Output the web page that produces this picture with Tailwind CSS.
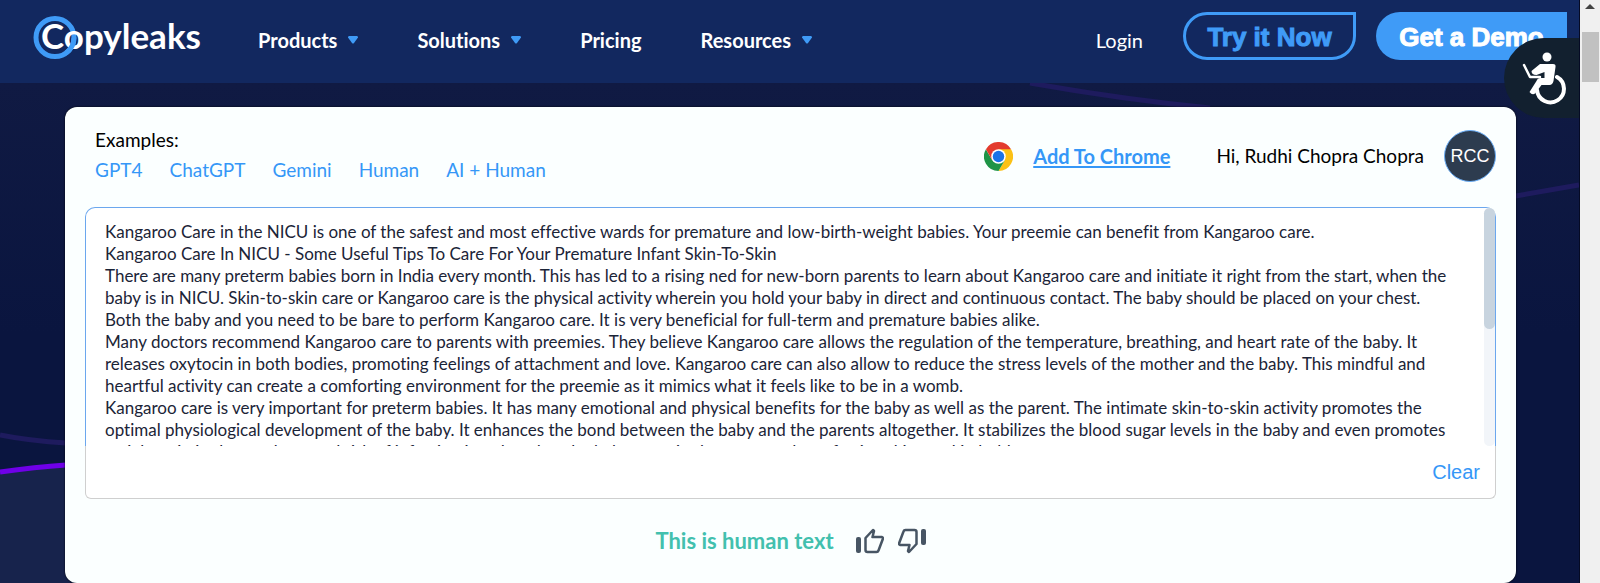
<!DOCTYPE html>
<html lang="en">
<head>
<meta charset="utf-8">
<meta name="viewport" content="width=device-width, initial-scale=1">
<title>Copyleaks AI Content Detector</title>
<script src="https://cdn.jsdelivr.net/npm/@tailwindcss/browser@4"></script>
</head>
<body class="flex h-screen overflow-hidden bg-[#0a153f] font-['Lato',sans-serif] text-black [font-variant-ligatures:none]">
<div class="relative flex min-w-0 flex-1 flex-col border-r border-[#050a24]">
  <header class="flex h-[83px] shrink-0 items-start bg-[#12285f] pl-[33px] pr-3">
    <a href="#" class="mt-4 block" aria-label="Copyleaks">
      <svg class="h-[43px] w-[180px]" viewBox="0 0 180 43">
        <circle cx="22" cy="21.500" r="19" fill="none" stroke="#3f9bf7" stroke-width="5"/>
        <text x="8" y="33" font-size="35" font-weight="700" fill="#fff">Copyleaks</text>
        <path d="M41 21.500a19 19 0 0 1-8 15.500" fill="none" stroke="#3f9bf7" stroke-width="5"/>
      </svg>
    </a>
    <nav class="ml-[45px] mt-7 flex gap-[59px] text-xl/6 font-bold text-white">
      <a href="#" class="flex items-center gap-[11px]">Products<svg width="10" height="8" viewBox="0 0 10 8" fill="#3f9bf7"><path d="M1 0h8q1 .3 1 1.500L6 7q-1 1-2 0L0 1.500Q0 .3 1 0z"/></svg></a>
      <a href="#" class="flex items-center gap-[11px]">Solutions<svg width="10" height="8" viewBox="0 0 10 8" fill="#3f9bf7"><path d="M1 0h8q1 .3 1 1.500L6 7q-1 1-2 0L0 1.500Q0 .3 1 0z"/></svg></a>
      <a href="#">Pricing</a>
      <a href="#" class="flex items-center gap-[11px]">Resources<svg width="10" height="8" viewBox="0 0 10 8" fill="#3f9bf7"><path d="M1 0h8q1 .3 1 1.500L6 7q-1 1-2 0L0 1.500Q0 .3 1 0z"/></svg></a>
    </nav>
    <a href="#" class="ml-auto mr-10 mt-7 text-xl/6 text-white">Login</a>
    <button class="mr-5 mt-3 h-12 w-[173px] rounded-[24px] rounded-tr-none border-3 border-[#3f9bf7] pt-[2px] font-['Liberation_Sans',sans-serif] text-[26px]/6 font-bold text-[#3f9bf7] [-webkit-text-stroke:1px]">Try it Now</button>
    <button class="mt-3 h-12 w-[191px] rounded-l-[24px] bg-[#3f9bf7] pt-[2px] font-['Liberation_Sans',sans-serif] text-[26px]/6 font-bold text-white [-webkit-text-stroke:1px]">Get a Demo</button>
  </header>

  <main class="relative min-h-0 flex-1 pl-[65px] pr-[63px] pt-6">
    <svg class="absolute inset-0 h-full w-full" viewBox="0 0 1579 500" preserveAspectRatio="none" fill="none">
      <defs><linearGradient id="sky" x2="0" y2="1"><stop stop-color="#101a43"/><stop offset=".5" stop-color="#0a153f"/><stop offset="1" stop-color="#0a153f"/></linearGradient></defs>
      <path fill="url(#sky)" d="M0 0h1579v500H0z"/>
      <path fill="#17234c" d="M0 390L70 381V500H0z"/>
      <path stroke="#1e1b5e" stroke-width="5" d="M1030 0Q1120 16 1210 25M0 352Q30 358 66 360M1510 114L1579 102"/>
      <path stroke="#6f00e8" stroke-width="5" d="M0 389Q35 384 66 382"/>
      <path stroke="#7c50d0" stroke-width="3" d="M88 500h24M948 500h22"/>
    </svg>
    <section class="relative rounded-xl bg-[#fbffff] px-5 pb-[26px] pt-[18px] shadow-[0_0_2px_#000]">
      <div class="flex items-start justify-between pl-[10px]">
        <div class="text-[19px]/[30px]">
          <p>Examples:</p>
          <div class="flex gap-[27px] text-[#3597f7]">
            <a href="#">GPT4</a><a href="#">ChatGPT</a><a href="#">Gemini</a><a href="#">Human</a><a href="#">AI + Human</a>
          </div>
        </div>
        <div class="mt-[5px] flex items-center text-[19px]/[30px]">
          <svg class="mr-5" width="29" height="29" viewBox="0 0 48 48">
            <path fill="#e33b2e" d="M24 24L3.200 12A24 24 0 0 1 44.800 12z"/>
            <path fill="#fbc116" d="M24 12h20.800A24 24 0 0 1 24 48L34.400 30z"/>
            <path fill="#1e9446" d="M3.200 12A24 24 0 0 0 24 48L34.400 30 24 34 13.600 30z"/>
            <path fill="#e33b2e" d="M3.200 12L13.600 30 18 16 24 12h20.800z"/>
            <circle cx="24" cy="24" r="12" fill="#fff"/><circle cx="24" cy="24" r="9.500" fill="#1a73e8"/>
          </svg>
          <a href="#" class="mr-[46px] text-xl/[30px] font-bold text-[#3597f7] underline decoration-2 underline-offset-2">Add To Chrome</a>
          <span class="mr-5">Hi, Rudhi Chopra Chopra</span>
          <button class="size-[52px] rounded-full border border-[#69acf5] bg-[#2d3c4f] font-['Liberation_Sans',sans-serif] text-lg text-white">RCC</button>
        </div>
      </div>
      <div class="mt-[22px] rounded-t-[10px] rounded-b-md bg-white">
        <div class="flex h-[239px] rounded-t-[10px] border-x border-t border-[#6ba7ee]">
          <textarea aria-label="Text to check" wrap="off" spellcheck="false" class="h-full min-w-0 flex-1 resize-none overflow-hidden bg-transparent pl-[19px] pt-[13px] text-[17px]/[22px] text-[#1b2437] outline-none">Kangaroo Care in the NICU is one of the safest and most effective wards for premature and low-birth-weight babies. Your preemie can benefit from Kangaroo care.
Kangaroo Care In NICU - Some Useful Tips To Care For Your Premature Infant Skin-To-Skin
There are many preterm babies born in India every month. This has led to a rising ned for new-born parents to learn about Kangaroo care and initiate it right from the start, when the
baby is in NICU. Skin-to-skin care or Kangaroo care is the physical activity wherein you hold your baby in direct and continuous contact. The baby should be placed on your chest.
Both the baby and you need to be bare to perform Kangaroo care. It is very beneficial for full-term and premature babies alike.
Many doctors recommend Kangaroo care to parents with preemies. They believe Kangaroo care allows the regulation of the temperature, breathing, and heart rate of the baby. It
releases oxytocin in both bodies, promoting feelings of attachment and love. Kangaroo care can also allow to reduce the stress levels of the mother and the baby. This mindful and
heartful activity can create a comforting environment for the preemie as it mimics what it feels like to be in a womb.
Kangaroo care is very important for preterm babies. It has many emotional and physical benefits for the baby as well as the parent. The intimate skin-to-skin activity promotes the
optimal physiological development of the baby. It enhances the bond between the baby and the parents altogether. It stabilizes the blood sugar levels in the baby and even promotes
weight gain in the newborn and risk of infection is reduced as the baby stays in the warm and comforting skin-to-skin hold.</textarea>
          <div class="h-full w-[11px] shrink-0 rounded-full bg-[#f2f5f9]"><div class="h-[121px] rounded-full bg-[#c8d4df]"></div></div>
        </div>
        <div class="flex h-[53px] items-center justify-end rounded-b-md border-x border-b border-[#cfcfcf] pr-[15px]">
          <button class="font-['Liberation_Sans',sans-serif] text-xl/6 text-[#3597f7]">Clear</button>
        </div>
      </div>
      <div class="mt-[26px] flex items-center justify-center text-[#475564]">
        <p class="mr-[22px] text-[22px]/8 font-bold text-[#42c0ae]">This is human text</p>
        <button aria-label="Like" class="mr-[14px]"><svg width="28" height="26" viewBox="0 0 28 26"><rect y="9" width="5" height="16" rx="2" fill="currentColor"/><path d="M9.500 10L17 2l1 1-1.500 6H26q1 .5 1 1.500l-4.500 12q-.5 1.500-2 1.500h-9q-2 0-2-2z" fill="none" stroke="currentColor" stroke-width="2.500" stroke-linejoin="round"/></svg></button>
        <button aria-label="Dislike"><svg class="rotate-180" width="28" height="26" viewBox="0 0 28 26"><rect y="9" width="5" height="16" rx="2" fill="currentColor"/><path d="M9.500 10L17 2l1 1-1.500 6H26q1 .5 1 1.500l-4.500 12q-.5 1.500-2 1.500h-9q-2 0-2-2z" fill="none" stroke="currentColor" stroke-width="2.500" stroke-linejoin="round"/></svg></button>
      </div>
    </section>
  </main>
  <button aria-label="Accessibility" class="absolute right-0 top-[38px] flex h-20 w-[75px] items-center rounded-l-[40px] bg-[#12202f] pl-[17px]">
    <svg width="46" height="54" viewBox="0 0 46 54" fill="none" stroke="#fff" stroke-linecap="round" stroke-linejoin="round">
      <circle cx="26" cy="6" r="4.500" fill="#fff" stroke="none"/>
      <path d="M19 13h13q3 0 2.500 3l-2 14q-1 4-4 4h-8l-6 8q-3 3-6-1l7-11q1-3 4-3h4v-6l-8 3q-5 0-5-4z" fill="#fff" stroke="none"/>
      <path d="M3 14l6 12h10" stroke-width="2.500"/>
      <path d="M36 26a13.500 13.500 0 1 1-20 13" stroke-width="4"/>
    </svg>
  </button>
</div>
<div class="flex w-[20px] shrink-0 flex-col items-center bg-[#f0f0f0]" aria-hidden="true">
  <svg class="mt-1" width="10" height="5" viewBox="0 0 10 5"><path d="M0 5l5-5 5 5z" fill="#444"/></svg>
  <div class="mt-[23px] h-[50px] w-[17px] bg-[#c1c1c1]"></div>
</div>
</body>
</html>
